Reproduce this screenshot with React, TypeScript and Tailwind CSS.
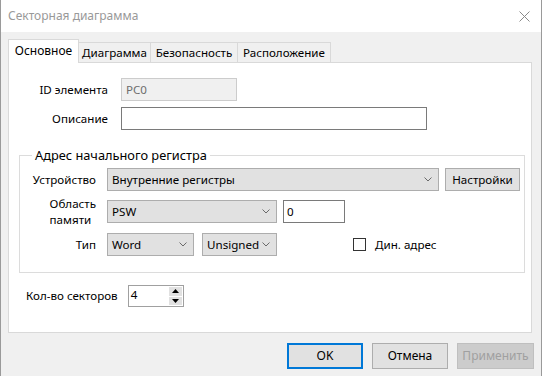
import React from "react";

const FONT = { fontFamily: '"Segoe UI", "Noto Sans", "Liberation Sans", sans-serif' };

function Chevron() {
  return (
    <svg width="8" height="5" viewBox="0 0 8 5" className="shrink-0">
      <path d="M0.5 0.5 L4 4 L7.5 0.5" fill="none" stroke="#6a6a6a" strokeWidth="1" />
    </svg>
  );
}

function Combo({ value, className }: { value: string; className: string }) {
  return (
    <div
      className={`flex items-center justify-between h-[23px] bg-[#e1e1e1] border border-[#adadad] pl-[4px] pr-[6px] ${className}`}
    >
      <span>{value}</span>
      <Chevron />
    </div>
  );
}

function Button({ label, className }: { label: string; className: string }) {
  return (
    <div className={`flex items-center justify-center ${className}`}>{label}</div>
  );
}

export default function App() {
  return (
    <div
      className="w-[542px] h-[376px] bg-[#f0f0f0] border-x border-[#9a9a9a] text-[11.6px] leading-none text-black overflow-hidden"
      style={FONT}
    >
      {/* Title bar */}
      <div className="h-[32px] bg-white flex items-center justify-between pl-[7px] pr-[11px]">
        <span className="text-[#999999] text-[12px]">Секторная диаграмма</span>
        <svg width="11" height="11" viewBox="0 0 11 11">
          <path d="M0.5 0.5 L10.5 10.5 M10.5 0.5 L0.5 10.5" stroke="#8a8a8a" strokeWidth="1" />
        </svg>
      </div>

      <div className="pl-[7px] pt-[7px]">
        {/* Tabs */}
        <div className="flex items-end h-[23px]">
          <div className="relative z-10 w-[71px] h-[24px] -mb-[1px] bg-white border-l border-t border-r border-[#d9d9d9] flex items-center justify-center pb-[2px] text-[12px]">
            Основное
          </div>
          {[
            ["Диаграмма", "w-[72px]"],
            ["Безопасность", "w-[87px]"],
            ["Расположение", "w-[93px]"],
          ].map(([t, w]) => (
            <div
              key={t}
              className={`${w} h-[20px] border-t border-r border-[#d9d9d9] flex items-center justify-center`}
            >
              {t}
            </div>
          ))}
        </div>

        {/* Panel */}
        <div className="w-[524px] h-[271px] bg-white border border-[#d9d9d9] pt-[15px]">
          <div className="flex items-center">
            <div className="w-[99px] text-right">ID элемента</div>
            <div className="ml-[13px] w-[116px] h-[23px] bg-[#f0f0f0] border border-[#cccccc] flex items-center pl-[4px] text-[#6d6d6d]">
              PC0
            </div>
          </div>
          <div className="flex items-center mt-[6px]">
            <div className="w-[99px] text-right">Описание</div>
            <div className="ml-[13px] w-[306px] h-[23px] bg-white border border-[#7a7a7a]" />
          </div>

          {/* Group box */}
          <div className="ml-[10px] mt-[25px] w-[506px] h-[118px] border border-[#dcdcdc]">
            <div className="-mt-[9px] ml-[12px] w-fit bg-white px-[3px] h-[16px] flex items-center text-[12.8px]">
              Адрес начального регистра
            </div>
            <div className="flex items-center mt-[5px]">
              <div className="w-[76px] text-right">Устройство</div>
              <Combo value="Внутренние регистры" className="ml-[11px] w-[332px]" />
              <Button
                label="Настройки"
                className="ml-[6px] w-[75px] h-[23px] bg-[#e1e1e1] border border-[#adadad]"
              />
            </div>
            <div className="flex items-center mt-[4px]">
              <div className="w-[76px] flex justify-end">
                <div className="leading-[16px] pt-[1px]">
                  Область
                  <br />
                  памяти
                </div>
              </div>
              <Combo value="PSW" className="ml-[11px] w-[170px]" />
              <div className="ml-[6px] w-[62px] h-[23px] bg-white border border-[#7a7a7a] flex items-center pl-[3px]">
                0
              </div>
            </div>
            <div className="flex items-center mt-[5px]">
              <div className="w-[76px] text-right">Тип</div>
              <Combo value="Word" className="ml-[11px] w-[87px]" />
              <Combo value="Unsigned" className="ml-[8px] w-[75px] pl-[3px]" />
              <div className="ml-[76px] w-[13px] h-[13px] border border-[#333333] bg-white" />
              <span className="ml-[9px]">Дин. адрес</span>
            </div>
          </div>

          {/* Sector count */}
          <div className="flex items-center mt-[12px] ml-[17px]">
            <span>Кол-во секторов</span>
            <div className="ml-[10px] w-[56px] h-[22px] border border-[#a0a0a0] flex">
              <div className="flex-1 pl-[2px] pt-[3px]">4</div>
              <div className="w-[14px] flex flex-col gap-[1px] p-[1px] pl-0">
                <div className="flex-1 bg-[#e1e1e1] flex items-center justify-center">
                  <svg width="7" height="4" viewBox="0 0 7 4">
                    <path d="M0 4 L3.5 0 L7 4 Z" fill="#000" />
                  </svg>
                </div>
                <div className="flex-1 bg-[#e1e1e1] flex items-center justify-center">
                  <svg width="7" height="4" viewBox="0 0 7 4">
                    <path d="M0 0 L3.5 4 L7 0 Z" fill="#000" />
                  </svg>
                </div>
              </div>
            </div>
          </div>
        </div>

        {/* Dialog buttons */}
        <div className="flex justify-end gap-[9px] mt-[10px] pr-[7px] text-[12px]">
          <Button label="OK" className="w-[76px] h-[26px] bg-[#e1e1e1] border-2 border-[#0078d7]" />
          <Button label="Отмена" className="w-[76px] h-[26px] bg-[#e1e1e1] border border-[#adadad]" />
          <Button
            label="Применить"
            className="w-[77px] h-[26px] bg-[#cccccc] border border-[#bfbfbf] text-[#a0a0a0]"
          />
        </div>
      </div>
    </div>
  );
}
